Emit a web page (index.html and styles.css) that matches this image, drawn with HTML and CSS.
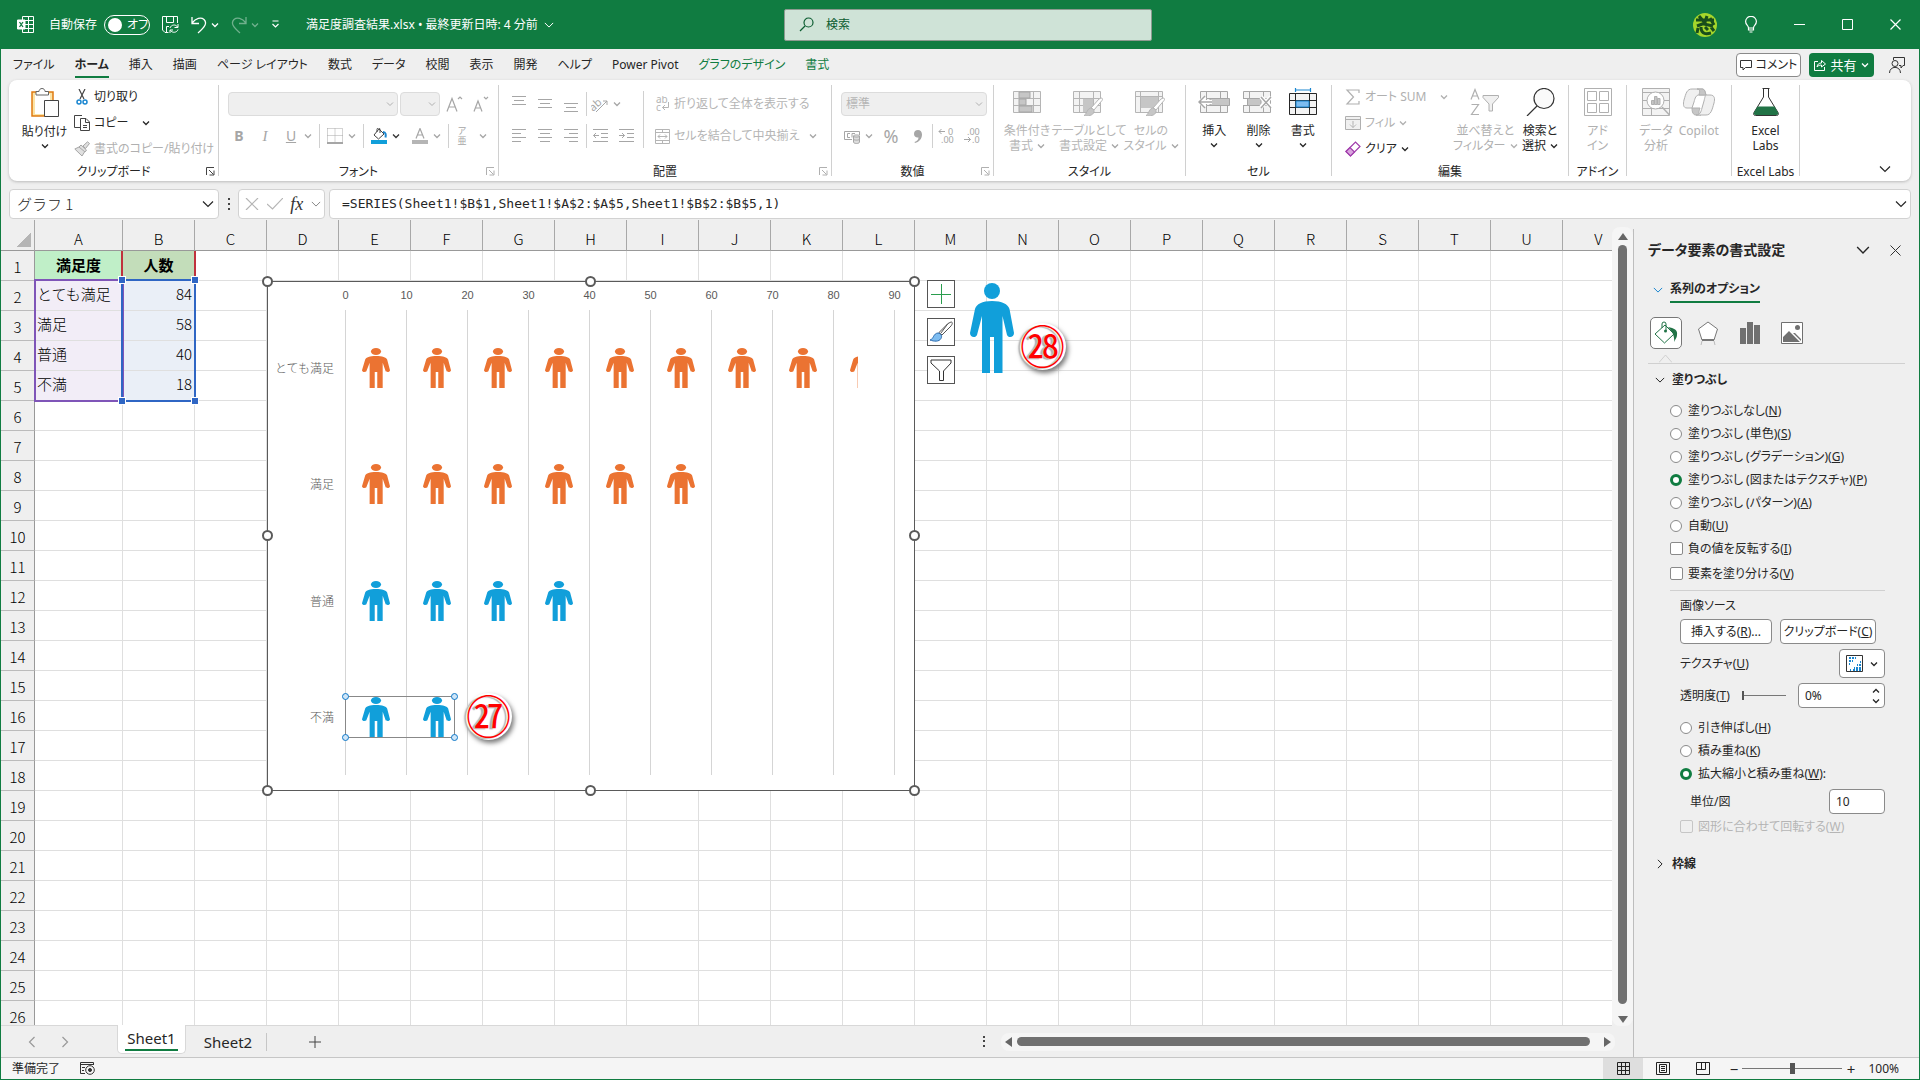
FILE: index.html
```
<!DOCTYPE html>
<html lang="ja">
<head>
	<meta charset="utf-8">
	<title>満足度調査結果.xlsx - Excel</title>
	<link rel="stylesheet" href="styles.css">
</head>
<body>
	<svg class="defs" aria-hidden="true">
		<symbol id="chev" viewBox="0 0 8 8"><path d="M1 2.5 L4 5.5 L7 2.5" fill="none" stroke="currentColor" stroke-width="1.3"/></symbol>
		<symbol id="bigchev" viewBox="0 0 12 12"><path d="M1 3.5 L6 8.5 L11 3.5" fill="none" stroke="currentColor" stroke-width="1.2"/></symbol>
		<symbol id="launch" viewBox="0 0 9 9"><path d="M0.5 8 V0.5 H8 M3 3 L7.5 7.5 M8 3.5 V8 H3.5" fill="none" stroke="currentColor"/></symbol>
		<symbol id="person" viewBox="0 0 44 90" preserveAspectRatio="none">
			<circle cx="22" cy="8" r="8"/>
			<path d="M22 18 C32 18 38 21 39.500 26 L44 50 C44 55 38 55 37 52 L32.500 33 V90 H24 V54 H20 V90 H12 V33 L7 52 C6 55 0 55 0 50 L5 26 C6.500 21 12 18 22 18 Z"/>
		</symbol>
		<symbol id="grid" viewBox="0 0 28 22"><path d="M.5 .5 H27.500 V21.500 H.5 Z" fill="#f3f3f3" stroke="currentColor"/><path d="M.5 7.500 H27.500 M.5 14.500 H27.500 M6.500 .5 V21.500 M20.500 .5 V21.500" fill="none" stroke="currentColor"/></symbol>
		<symbol id="brush" viewBox="0 0 20 20"><path d="M18 1 C19.500 1 20 2 19 3.500 L11 13 L8 11 L16 2 Z" fill="#fff" stroke="currentColor"/><path d="M7.500 11 C10 11.500 11.500 13 11 15 C10 18.500 5 19.500 1 18.500 C4 17.500 3.500 12 7.500 11 Z" fill="#c6c6c6" stroke="currentColor"/></symbol>
	</svg>

	<header class="titlebar">
		<div class="title-left">
			<svg width="17" height="17" viewBox="0 0 17 17" fill="none" stroke="#fff"><path d="M5.500 4 V.5 H16.500 V16.500 H5.500 V13 M5.500 4.500 H16.500 M8 8.500 H16.500 M5.500 12.500 H16.500 M11.500 .5 V16.500"/><path d="M.5 4 H8 V13 H.5 Z" fill="#fff"/><path d="M2.500 6 L6 11 M6 6 L2.500 11" stroke="#107c41" stroke-width="1.300"/></svg>
			<span class="autosave">自動保存</span>
			<button class="toggle"><i></i>オフ</button>
			<button class="t-btn save"><svg width="17" height="17" viewBox="0 0 17 17" fill="none" stroke="#fff"><path d="M6.500 16.500 H3 L.5 14 V.5 H15.500 V7 M4.500 .5 V6.500 H11.500 V.5 M4.500 16 V10.500 H7"/><path d="M8 12 C9 8.500 14 8 15.500 11 M16 8 V11.500 H12.500 M16 13.500 C15 17 10 17 8.500 14.500 M8 17 V14 H11"/></svg></button>
			<button class="t-btn"><svg width="16" height="18" viewBox="0 0 16 18" fill="none" stroke="#fff" stroke-width="1.300"><path d="M1 1 V7.500 H8 M1 7 C5 2 10 1 13 3.500 C16.500 7 14 11 7 17"/></svg><svg class="chev"><use href="#chev"/></svg></button>
			<button class="t-btn dim"><svg width="16" height="18" viewBox="0 0 16 18" fill="none" stroke="#fff" stroke-width="1.300"><path d="M15 1 V7.500 H8 M15 7 C11 2 6 1 3 3.500 C-.5 7 2 11 9 17"/></svg><svg class="chev"><use href="#chev"/></svg></button>
			<button class="t-btn more"><svg width="9" height="9" viewBox="0 0 9 9" fill="none" stroke="#fff" stroke-width="1.200"><path d="M1.500 1 H7.500 M1.500 4 L4.500 7 L7.500 4"/></svg></button>
			<button class="doc">満足度調査結果.xlsx • 最終更新日時: 4 分前<svg class="chev10"><use href="#bigchev"/></svg></button>
		</div>
		<label class="search">
			<svg width="15" height="15" viewBox="0 0 15 15" fill="none" stroke="#0b5c30" stroke-width="1.200"><circle cx="9.500" cy="5.500" r="4.500"/><path d="M6 9 L1 14"/></svg>
			<input type="text" placeholder="検索">
		</label>
		<div class="title-right">
			<button class="avatar"><svg width="24" height="24" viewBox="0 0 24 24"><circle cx="12" cy="12" r="12" fill="#a5d62b"/><path d="M3 7 H21 M6 3 L12 10 L4 13 M14 3 L12 9 M11 11 L20 13 M17 5 L21 12 M5 15 L4 20 M8 14 C8 22 14 21 18 20 M12 14 L15 17 M18 14 L21 18" fill="none" stroke="#184d1b" stroke-width="3"/></svg></button>
			<button class="w-btn"><svg width="12" height="17" viewBox="0 0 12 17" fill="none" stroke="#fff" stroke-width="1.200"><path d="M3.500 12 C3.500 9 .6 9 .6 5.500 A5.400 5.200 0 0 1 11.400 5.500 C11.400 9 8.500 9 8.500 12 Z M3.500 12 V14 H8.500 V12 M4.500 16 H7.500"/></svg></button>
			<button class="w-btn"><svg width="11" height="11" viewBox="0 0 11 11" stroke="#fff"><path d="M0 5.500 H11"/></svg></button>
			<button class="w-btn"><svg width="11" height="11" viewBox="0 0 11 11" stroke="#fff" fill="none"><path d="M.5 .5 H10.500 V10.500 H.5 Z"/></svg></button>
			<button class="w-btn"><svg width="11" height="11" viewBox="0 0 11 11" stroke="#fff" stroke-width="1.200"><path d="M.5 .5 L10.500 10.500 M10.500 .5 L.5 10.500"/></svg></button>
		</div>
	</header>

	<nav class="menu">
		<button>ファイル</button>
		<button class="active">ホーム</button>
		<button>挿入</button>
		<button>描画</button>
		<button>ページ レイアウト</button>
		<button>数式</button>
		<button>データ</button>
		<button>校閲</button>
		<button>表示</button>
		<button>開発</button>
		<button>ヘルプ</button>
		<button>Power Pivot</button>
		<button class="context">グラフのデザイン</button>
		<button class="context">書式</button>
		<div class="menu-right">
			<button class="comment"><svg width="12" height="12" viewBox="0 0 12 12" fill="none" stroke="#333"><path d="M.5 1.500 H11.500 V8.500 H5.500 L3 11 V8.500 H.5 Z"/></svg>コメント</button>
			<button class="share"><svg width="12" height="12" viewBox="0 0 12 12" fill="none" stroke="#fff"><path d="M4 2.500 H.5 V11.500 H10.500 V8 M3 8 C3.500 5 5 4 7.500 4 V1.500 L11.500 5 L7.500 8 V6 C5 6 4 7 3 8 Z"/></svg>共有<svg class="chev"><use href="#chev"/></svg></button>
			<button class="presence"><svg width="16" height="16" viewBox="0 0 16 16" fill="none" stroke="#333"><path d="M4.500 3 V.5 H15.500 V8.500 H14 L12 11 V8.500 H10"/><circle cx="6" cy="6.500" r="3"/><path d="M.5 16 C.5 8.500 11.500 8.500 11.500 16"/></svg></button>
		</div>
	</nav>

	<section class="ribbon">
		<div class="group clipboard">
			<div class="body">
				<button class="big"><svg width="28" height="29" viewBox="0 0 28 29"><path d="M1 4 H22 V28 H1 Z" fill="#fbe3a6" stroke="#e07b10" stroke-width="1.500"/><path d="M4 6 H19 V26 H4 Z" fill="#fff"/><path d="M5 7 V3.500 H8 C8 -.5 14 -.5 14 3.500 H17.500 V7 Z" fill="#fff" stroke="#666"/><path d="M13.500 12.500 H27.500 V28.500 H13.500 Z" fill="#fff" stroke="#444"/></svg>貼り付け<svg class="chev"><use href="#chev"/></svg></button>
				<div class="stack">
					<button class="small"><svg width="16" height="16" viewBox="0 0 16 16" fill="none"><path d="M5 0 L10 10 M11 0 L6 10" stroke="#444" stroke-width="1.200"/><circle cx="5" cy="13" r="2" stroke="#1a86d0" stroke-width="1.500"/><circle cx="11" cy="13" r="2" stroke="#1a86d0" stroke-width="1.500"/></svg>切り取り</button>
					<button class="small"><svg width="16" height="16" viewBox="0 0 16 16" fill="#fff" stroke="#444"><path d="M8 .5 H.5 V12.500 H6"/><path d="M6.500 3.500 H12 L15.500 7 V15.500 H6.500 Z M11.500 3.500 V7.500 H15.500 M9 10.500 H13 M9 12.500 H13"/></svg>コピー<svg class="chev far"><use href="#chev"/></svg></button>
					<button class="small" disabled><svg width="16" height="16" viewBox="0 0 16 16" fill="#e0e0e0" stroke="#a6a6a6"><path d="M9 5 L13.500 .8 L15.500 2.500 L11.500 7.500 Z M7 4 L12.500 9 L11 11 L5 6 Z M5 6 L.8 8 L8 15 L10.500 11"/></svg>書式のコピー/貼り付け</button>
				</div>
			</div>
			<div class="caption">クリップボード<svg class="launch dark"><use href="#launch"/></svg></div>
		</div>

		<div class="group font off">
			<div class="body rows">
				<div class="line">
					<select class="face" aria-label="フォント" disabled><option></option></select><select class="size" aria-label="サイズ" disabled><option></option></select>
					<button class="ic"><svg width="18" height="18" viewBox="0 0 18 18"><path d="M1 16.500 L6 3.500 L11 16.500 M2.800 12 H9.200 M12 4 L14 2 L16 4" fill="none" stroke="currentColor" stroke-width="1.200"/></svg></button>
					<button class="ic"><svg width="18" height="18" viewBox="0 0 18 18"><path d="M2 16.500 L6 6 L10 16.500 M3.500 13 H8.500 M12 2 L14 4 L16 2" fill="none" stroke="currentColor" stroke-width="1.200"/></svg></button>
				</div>
				<div class="line second">
					<button class="ic b">B</button><button class="ic i">I</button><button class="ic u">U</button><svg class="chev"><use href="#chev"/></svg>
					<span class="vr"></span>
					<button class="ic"><svg width="16" height="16" viewBox="0 0 16 16" fill="none" stroke="currentColor"><path d="M.5 .5 H15.500 V14 M.5 .5 V14 M8 .5 V14 M.5 7.500 H15.500" stroke-dasharray="1 1"/><path d="M0 15 H16" stroke-width="2"/></svg></button><svg class="chev"><use href="#chev"/></svg>
					<span class="vr"></span>
					<button class="ic live"><svg width="16" height="16" viewBox="0 0 16 16"><path d="M8 1 L13 6 L7.500 11 L3 7 Z M6 4 V1.500 A1.500 1.500 0 0 1 9 1.500 V5" fill="#fff" stroke="#444"/><path d="M12 4 C15 4 15 7 14.500 9.500" fill="none" stroke="#1a86d0" stroke-width="2"/><path d="M0 12 H16 V16 H0 Z" fill="#119fda"/></svg></button><svg class="chev live"><use href="#chev"/></svg>
					<button class="ic color"><svg width="16" height="16" viewBox="0 0 16 16"><path d="M4 10.500 L8 .5 L12 10.500 M5.500 7 H10.500" fill="none" stroke="currentColor" stroke-width="1.200"/><path d="M0 12 H16 V16 H0 Z" fill="#b5b5b5"/></svg></button><svg class="chev"><use href="#chev"/></svg>
					<span class="vr"></span>
					<button class="ic ruby">ア<br>亜</button><svg class="chev"><use href="#chev"/></svg>
				</div>
			</div>
			<div class="caption">フォント<svg class="launch"><use href="#launch"/></svg></div>
		</div>

		<div class="group align off">
			<div class="body">
				<div class="rows">
					<div class="line">
						<button class="ic"><svg width="14" height="18" viewBox="0 0 14 18" stroke="currentColor"><path d="M0 1.500 H14 M2 5.500 H12 M0 9.500 H14"/></svg></button>
						<button class="ic"><svg width="14" height="18" viewBox="0 0 14 18" stroke="currentColor"><path d="M0 4.500 H14 M2 8.500 H12 M0 12.500 H14"/></svg></button>
						<button class="ic"><svg width="14" height="18" viewBox="0 0 14 18" stroke="currentColor"><path d="M0 8.500 H14 M2 12.500 H12 M0 16.500 H14"/></svg></button>
						<span class="vr"></span>
						<button class="ic"><svg width="18" height="18" viewBox="0 0 18 18"><text class="glyph" x="-3" y="12" font-size="11" transform="rotate(-42 6 8)">ab</text><path d="M5 17 L16 6 M12 6 H16 V10" fill="none" stroke="currentColor"/></svg></button><svg class="chev"><use href="#chev"/></svg>
					</div>
					<div class="line second">
						<button class="ic"><svg width="14" height="14" viewBox="0 0 14 14" stroke="currentColor"><path d="M0 .5 H14 M0 4.500 H9 M0 8.500 H14 M0 12.500 H9"/></svg></button>
						<button class="ic"><svg width="14" height="14" viewBox="0 0 14 14" stroke="currentColor"><path d="M0 .5 H14 M2 4.500 H12 M0 8.500 H14 M2 12.500 H12"/></svg></button>
						<button class="ic"><svg width="14" height="14" viewBox="0 0 14 14" stroke="currentColor"><path d="M0 .5 H14 M5 4.500 H14 M0 8.500 H14 M5 12.500 H14"/></svg></button>
						<span class="vr"></span>
						<button class="ic"><svg width="15" height="14" viewBox="0 0 15 14" stroke="currentColor" fill="none"><path d="M0 .5 H15 M8 4.500 H15 M8 8.500 H15 M0 12.500 H15 M6 6.500 H.5 M3 4 L.5 6.500 L3 9"/></svg></button>
						<button class="ic"><svg width="15" height="14" viewBox="0 0 15 14" stroke="currentColor" fill="none"><path d="M0 .5 H15 M8 4.500 H15 M8 8.500 H15 M0 12.500 H15 M0 6.500 H5.500 M3 4 L5.500 6.500 L3 9"/></svg></button>
					</div>
				</div>
				<span class="vr tall"></span>
				<div class="rows wide">
					<button class="small wrap"><svg width="15" height="16" viewBox="0 0 15 16"><text class="glyph" x="1" y="7" font-size="10">ab</text><text class="glyph" x="1" y="15" font-size="10">c</text><path d="M13.500 6 V11.500 H7.500 M10 9 L7.500 11.500 L10 14" fill="none" stroke="currentColor"/></svg>折り返して全体を表示する</button>
					<button class="small wrap"><svg width="15" height="15" viewBox="0 0 15 15" fill="none" stroke="currentColor"><path d="M.5 .5 H14.500 V14.500 H.5 Z M.5 3.500 H14.500 M.5 11.500 H14.500 M7.500 .5 V3.500 M7.500 11.500 V14.500 M3 7.500 H12 M5 5.500 L3 7.500 L5 9.500 M10 5.500 L12 7.500 L10 9.500"/></svg>セルを結合して中央揃え<svg class="chev end"><use href="#chev"/></svg></button>
				</div>
			</div>
			<div class="caption">配置<svg class="launch"><use href="#launch"/></svg></div>
		</div>

		<div class="group number off">
			<div class="body rows">
				<div class="line"><select class="format" aria-label="表示形式" disabled><option>標準</option></select></div>
				<div class="line second">
					<button class="ic"><svg width="16" height="16" viewBox="0 0 16 16" fill="none" stroke="currentColor"><path d="M8 11.500 H.5 V3.500 H15.500 V7"/><path d="M6 5.500 H3.500 V9.500 H6 M8 9.500 V5.500 H11"/><path d="M9.500 8 V14 C9.500 16 15.500 16 15.500 14 V8 C15.500 6.500 9.500 6.500 9.500 8 C9.500 9.500 15.500 9.500 15.500 8 M9.500 11 C9.500 12.500 15.500 12.500 15.500 11" fill="#ddd"/></svg></button><svg class="chev"><use href="#chev"/></svg>
					<button class="ic pct">%</button><button class="ic comma"><svg width="8" height="13" viewBox="0 0 8 13" fill="currentColor"><path d="M4 0 C6.500 0 8 2 8 4.500 C8 9 5 12 1 13 L.5 12 C3 11 4.500 9.500 4.500 7.500 C2 8 0 6.500 0 4 C0 1.500 1.500 0 4 0 Z"/></svg></button>
					<span class="vr"></span>
					<button class="ic"><svg width="16" height="16" viewBox="0 0 16 16"><path d="M7 3.500 H1 M3.500 1 L1 3.500 L3.500 6" fill="none" stroke="currentColor"/><text class="glyph" x="10" y="7" font-size="9">0</text><text class="glyph" x="3" y="15" font-size="9">.00</text></svg></button>
					<button class="ic"><svg width="16" height="16" viewBox="0 0 16 16"><path d="M0 11.500 H6.500 M4 9 L6.500 11.500 L4 14" fill="none" stroke="currentColor"/><text class="glyph" x="3" y="7" font-size="9">.00</text><text class="glyph" x="8" y="15" font-size="9">.0</text></svg></button>
				</div>
			</div>
			<div class="caption">数値<svg class="launch"><use href="#launch"/></svg></div>
		</div>

		<div class="group styles off">
			<div class="body">
				<button class="big"><svg width="32" height="28" viewBox="-2 -3 32 28"><use href="#grid" width="28" height="22"/><path d="M6 1 H17 V7 H6 Z M6 8 H13 V14 H6 Z M6 15 H19 V21 H6 Z" fill="#c6c6c6" stroke="#a6a6a6"/></svg>条件付き<span>書式<svg class="chev"><use href="#chev"/></svg></span></button>
				<button class="big"><svg width="32" height="28" viewBox="0 -3 32 28"><use href="#grid" width="28" height="22"/><path d="M10 8 H20 V21 H10 Z" fill="#c6c6c6"/><use href="#brush" x="10" y="6" width="20" height="20"/></svg>テーブルとして<span>書式設定<svg class="chev"><use href="#chev"/></svg></span></button>
				<button class="big"><svg width="32" height="28" viewBox="0 -3 32 28"><path d="M.5 .5 H27.500 V21.500 H.5 Z M.5 5.500 H27.500 M5.500 .5 V21.500 M23.500 .5 V21.500" fill="#f3f3f3" stroke="currentColor"/><path d="M6 6 H23 V17 H6 Z" fill="#c6c6c6"/><use href="#brush" x="10" y="6" width="20" height="20"/></svg>セルの<span>スタイル<svg class="chev"><use href="#chev"/></svg></span></button>
			</div>
			<div class="caption">スタイル</div>
		</div>

		<div class="group cells">
			<div class="body">
				<button class="big"><svg class="gray" width="32" height="28" viewBox="-2 -3 32 28"><use href="#grid" width="28" height="22"/><path d="M10 7.500 H29.500 V14.500 H10 Z" fill="#c6c6c6" stroke="#a6a6a6"/><path d="M12 11 H0 M5 6 L0 11 L5 16" fill="none" stroke="#fff" stroke-width="4"/><path d="M12 11 H-1 M5 5 L-1 11 L5 17" fill="none" stroke="#a6a6a6" stroke-width="1.500"/></svg>挿入<svg class="chev"><use href="#chev"/></svg></button>
				<button class="big"><svg class="gray" width="32" height="28" viewBox="0 -3 32 28"><use href="#grid" width="28" height="22"/><path d="M0 8 H4 V14 H0 Z" fill="#fff"/><path d="M4.500 7.500 H18 V14.500 H4.500 Z" fill="#c6c6c6" stroke="#a6a6a6"/><path d="M18 6 L28 16 M28 6 L18 16" stroke="#fff" stroke-width="4"/><path d="M18 6 L28 17 M28 6 L18 17" stroke="#a6a6a6" stroke-width="1.500"/></svg>削除<svg class="chev"><use href="#chev"/></svg></button>
				<button class="big"><svg width="32" height="28" viewBox="-2 -5 32 28"><path d="M6.500 -3 H21.500 M6.500 -5 V-1 M21.500 -5 V-1" stroke="#1a86d0" stroke-width="1.200"/><use href="#grid" width="28" height="22"/><path d="M7 8 H20 V14 H7 Z" fill="#7dbcf0" stroke="#1a86d0"/></svg>書式<svg class="chev"><use href="#chev"/></svg></button>
			</div>
			<div class="caption">セル</div>
		</div>

		<div class="group edit">
			<div class="body">
				<div class="stack">
					<button class="small" disabled><svg width="16" height="16" viewBox="0 0 16 16" fill="none" stroke="currentColor" stroke-width="1.200"><path d="M14 4 V1 H2 L8.500 8 L2 15 H14 V12"/></svg>オート SUM<svg class="chev far"><use href="#chev"/></svg></button>
					<button class="small" disabled><svg width="16" height="14" viewBox="0 0 16 14" fill="#f0f0f0" stroke="currentColor"><path d="M.5 .5 H15.500 V13.500 H.5 Z M.5 3.500 H15.500 M8 5 V11.500 M5 8.500 L8 11.500 L11 8.500"/></svg>フィル<svg class="chev"><use href="#chev"/></svg></button>
					<button class="small"><svg width="16" height="16" viewBox="0 0 16 16" stroke="#a03bab" stroke-width="1.200"><path d="M1 10.500 L10.500 1 L15 5.500 L5.500 15 Z" fill="#fff"/><path d="M1 10.500 L5 6.500 L9.500 11 L5.500 15 Z" fill="#d9a5de"/></svg>クリア<svg class="chev"><use href="#chev"/></svg></button>
				</div>
				<button class="big sort" disabled><svg width="30" height="28" viewBox="0 0 30 28"><path d="M1 11.500 L5 1.500 L9 11.500 M2.500 8 H7.500 M1.500 16.500 H8.500 L1.500 26.500 H9" fill="none" stroke="currentColor" stroke-width="1.200"/><path d="M13 7.500 H28.500 V9.500 L22.500 16 V23 H19 V16 L13 9.500 Z" fill="#f0f0f0" stroke="currentColor"/></svg>並べ替えと<span>フィルター<svg class="chev"><use href="#chev"/></svg></span></button>
				<button class="big"><svg width="30" height="28" viewBox="0 0 30 28" fill="#fafafa" stroke="#333" stroke-width="1.200"><circle cx="19" cy="10.500" r="10"/><path d="M12 18 L2 28"/></svg>検索と<span>選択<svg class="chev"><use href="#chev"/></svg></span></button>
			</div>
			<div class="caption">編集</div>
		</div>

		<div class="group addin">
			<div class="body">
				<button class="big" disabled><svg width="28" height="28" viewBox="0 0 28 28" fill="none" stroke="currentColor"><path d="M.5 .5 H27.500 V27.500 H.5 Z M3.500 3.500 H12.500 V12.500 H3.500 Z M15.500 3.500 H24.500 V12.500 H15.500 Z M3.500 15.500 H12.500 V24.500 H3.500 Z M15.500 15.500 H24.500 V24.500 H15.500 Z"/></svg>アド<span>イン</span></button>
			</div>
			<div class="caption">アドイン</div>
		</div>

		<div class="group data">
			<div class="body">
				<button class="big" disabled><svg width="28" height="28" viewBox="0 0 28 28" fill="#f3f3f3" stroke="currentColor"><path d="M.5 .5 H27.500 V27.500 H.5 Z M.5 4.500 H27.500 M.5 12.500 H27.500 M.5 20.500 H27.500 M9.500 20 V27"/><circle cx="13.500" cy="12.500" r="8.500" fill="#fff"/><path d="M9.500 12.500 H12 V16.500 H9.500 Z M12.500 8.500 H15 V16.500 H12.500 Z M15.500 10.500 H18 V16.500 H15.500 Z" fill="#c6c6c6"/><path d="M20 19 L27.500 27" stroke-width="1.500"/></svg>データ<span>分析</span></button>
				<button class="big" disabled><svg width="32" height="28" viewBox="0 0 32 28" stroke="currentColor"><path d="M9 1 H19 C22 1 22 4 23 7 H16 C13 7 12 10 11 14 L9 20 H4 C0 20 0 16 1 12 C3 5 4 1 9 1 Z" fill="#f0f0f0"/><path d="M19 1 C22 1 22 4 23 7 H16 C17 3 17 1 14 1 Z M9 20 C9 24 10 27 13 27 H18 C15 27 16 23 17 20 Z" fill="#c6c6c6"/><path d="M23 7 H27 C32 7 32 11 31 15 C29 22 28 27 23 27 H13 C17 27 18 24 19 20 L21 13 C22 9 22 8 23 7 Z" fill="#f0f0f0"/></svg>Copilot<span>&nbsp;</span></button>
			</div>
		</div>

		<div class="group labs">
			<div class="body">
				<button class="big"><svg width="26" height="28" viewBox="0 0 26 28"><path d="M9.500 .5 H16.500 M10.500 .5 V9 L1 24.500 C0 26.500 1 27.500 2.500 27.500 H23.500 C25 27.500 26 26.500 25 24.500 L15.500 9 V.5" fill="#fff" stroke="#333"/><path d="M4.500 18.500 H21.500 L25 24.500 C25.500 26 25 27 23.500 27 H2.500 C1 27 .5 26 1 24.500 Z" fill="#217346"/></svg>Excel<span>Labs</span></button>
			</div>
			<div class="caption">Excel Labs</div>
		</div>
		<button class="collapse" aria-label="リボンを折りたたむ"><svg class="chev12"><use href="#bigchev"/></svg></button>
	</section>

	<section class="formula-bar">
		<div class="box name-box"><input type="text" value="グラフ 1" aria-label="名前ボックス"><svg class="chev12"><use href="#bigchev"/></svg></div>
		<svg width="3" height="12" viewBox="0 0 3 12" fill="#444"><path d="M0 0 H2 V2 H0 Z M0 5 H2 V7 H0 Z M0 10 H2 V12 H0 Z"/></svg>
		<div class="box fx-box">
			<svg width="14" height="12" viewBox="0 0 14 12" stroke="#b5b5b5" stroke-width="1.200"><path d="M1 0 L13 12 M13 0 L1 12"/></svg>
			<svg width="16" height="12" viewBox="0 0 16 12" fill="none" stroke="#b5b5b5" stroke-width="1.200"><path d="M0 6 L5.500 11 L16 0"/></svg>
			<button class="fx">fx</button>
			<svg class="chev10"><use href="#bigchev"/></svg>
		</div>
		<div class="box formula"><input type="text" aria-label="数式" value="=SERIES(Sheet1!$B$1,Sheet1!$A$2:$A$5,Sheet1!$B$2:$B$5,1)"><svg class="chev12"><use href="#bigchev"/></svg></div>
	</section>

	<main>
		<div class="workbook">
			<div class="sheet-row">
				<div class="sheet">
					<table id="cells"></table>

					<div class="range labels-range"></div>
					<div class="range name-range"></div>
					<div class="range values-range"><i></i><i></i><i></i><i></i></div>

					<div class="chart">
						<div class="axis" id="axis"></div>
						<div class="plot" id="plot"></div>
						<i class="handle tl"></i><i class="handle tc"></i><i class="handle tr"></i>
						<i class="handle ml"></i><i class="handle mr"></i>
						<i class="handle bl"></i><i class="handle bc"></i><i class="handle br"></i>
					</div>
					<div class="chart-tools">
						<button><svg width="22" height="22" viewBox="0 0 22 22" stroke="#2a9d4e"><path d="M11.500 1 V21 M1 11.500 H21"/></svg></button>
						<button><svg width="24" height="22" viewBox="0 0 24 22"><path d="M22 1 C24 1 23.500 3 22 5 L13 14 L10 11.500 L19 2.500 Z M19 2.500 L12 12" fill="#fff" stroke="#555"/><path d="M9 12 C12 12.500 13.500 15 12 17.500 C10 21 5 20.500 1 19 C5 18 4 12.500 9 12 Z" fill="#7dbcf0" stroke="#2b6cb0"/></svg></button>
						<button><svg width="22" height="22" viewBox="0 0 22 22" fill="#fff" stroke="#333"><path d="M1 1 H21 V4 L13.500 12 V21.500 H9.500 V12 L1 4 Z"/></svg></button>
					</div>
					<svg class="big-person"><use href="#person"/></svg>
					<span class="callout c27">㉗</span>
					<span class="callout c28">㉘</span>
				</div>
				<div class="vscroll"><i class="up"></i><i class="thumb"></i><i class="down"></i></div>
			</div>
			<div class="tabbar">
				<button class="nav"><svg class="chev12 prev"><use href="#bigchev"/></svg></button>
				<button class="nav"><svg class="chev12 next"><use href="#bigchev"/></svg></button>
				<button class="tab active"><span>Sheet1</span></button>
				<button class="tab">Sheet2</button>
				<button class="add"><svg width="12" height="12" viewBox="0 0 12 12" stroke="#444"><path d="M6 0 V12 M0 6 H12"/></svg></button>
				<svg class="grip" width="2" height="11" viewBox="0 0 2 11" fill="#444"><path d="M0 0 H2 V2 H0 Z M0 4 H2 V6 H0 Z M0 9 H2 V11 H0 Z"/></svg>
				<div class="hscroll"><i class="left"></i><i class="thumb"></i><i class="right"></i></div>
			</div>
		</div>

		<aside class="pane">
			<div class="pane-title"><h1>データ要素の書式設定</h1>
				<button><svg width="14" height="14" viewBox="0 0 12 12"><use href="#bigchev"/></svg></button>
				<button><svg width="11" height="11" viewBox="0 0 11 11" stroke="#333"><path d="M.5 .5 L10.500 10.500 M10.500 .5 L.5 10.500"/></svg></button>
			</div>
			<div class="options"><svg class="chev10 blue"><use href="#bigchev"/></svg><b>系列のオプション</b></div>
			<div class="kinds">
				<button class="on"><svg width="24" height="24" viewBox="0 0 24 24"><path d="M11 4 L20 13 L10.500 22 L1 13 Z" fill="#fff" stroke="#217346"/><path d="M8 7 V3 A2 2 0 0 1 12 3 V10" fill="none" stroke="#217346"/><circle cx="11.500" cy="10" r="1.500" fill="#217346"/><path d="M14 6 C20 7 24 9 23 14 C23 17 21 18 20.500 21 C20 16 20 12 14 6 Z" fill="#217346"/></svg></button>
				<button><svg width="20" height="24" viewBox="0 0 20 24"><path d="M10 1 L19.500 8 L16 19 H4 L.5 8 Z" fill="#fff" stroke="#777"/><path d="M4 19 H16" stroke="#777" stroke-width="2"/><path d="M4 20 L3 24 M16 20 L17 24" stroke="#bbb"/></svg></button>
				<button><svg width="20" height="22" viewBox="0 0 20 22" fill="#707070"><path d="M0 6 H6 V22 H0 Z M7 0 H13 V22 H7 Z M14 3 H20 V22 H14 Z"/></svg></button>
				<button><svg width="22" height="22" viewBox="0 0 22 22"><path d="M.5 .5 H21.500 V21.500 H.5 Z" fill="#fff" stroke="#707070"/><circle cx="16.500" cy="5.500" r="2.500" fill="#707070"/><path d="M2 20 V15 L8 9 L19 20 Z M12 11 L14 11 L20 17 V19 Z" fill="#707070"/></svg></button>
			</div>
			<svg class="notch" width="13" height="9" viewBox="0 0 13 9"><path d="M0 8.500 L6.500 1 L13 8.500" fill="#efefef" stroke="#d0d0d0"/></svg>
			<div class="section"><svg class="chev10"><use href="#bigchev"/></svg>塗りつぶし</div>
			<div class="choices">
				<label><input type="radio" name="fill">塗りつぶしなし(<u>N</u>)</label>
				<label><input type="radio" name="fill">塗りつぶし (単色)(<u>S</u>)</label>
				<label><input type="radio" name="fill">塗りつぶし (グラデーション)(<u>G</u>)</label>
				<label><input type="radio" name="fill" checked>塗りつぶし (図またはテクスチャ)(<u>P</u>)</label>
				<label><input type="radio" name="fill">塗りつぶし (パターン)(<u>A</u>)</label>
				<label><input type="radio" name="fill">自動(<u>U</u>)</label>
				<label><input type="checkbox">負の値を反転する(<u>I</u>)</label>
				<label class="gap"><input type="checkbox">要素を塗り分ける(<u>V</u>)</label>
			</div>
			<div class="details">
				<div class="source">画像ソース</div>
				<div class="row buttons"><button class="btn">挿入する(<u>R</u>)...</button><button class="btn">クリップボード(<u>C</u>)</button></div>
				<div class="row texture"><span>テクスチャ(<u>U</u>)</span><button class="btn pick" aria-label="テクスチャ"><svg width="17" height="17" viewBox="0 0 17 17"><path d="M.5 .5 H16.500 V16.500 H.5 Z" fill="#fff" stroke="#333"/><path d="M3 3 H5 M6 3 H8 M9 3 H10 M3 6 H5 M6 6 H7 M3 9 H4 M14 7 H15 M11 10 H12 M13 10 H15 M8 13 H9 M10 13 H12 M13 13 H15 M4 15 H5 M7 15 H9 M10 15 H12 M13 15 H15" stroke="#1a86d0" stroke-width="2"/></svg><svg class="chev"><use href="#chev"/></svg></button></div>
				<div class="row alpha"><label for="alpha">透明度(<u>T</u>)</label><input type="range" value="0" aria-label="透明度"><div class="spin"><input type="text" id="alpha" value="0%"><span><svg class="chev flip"><use href="#chev"/></svg><svg class="chev"><use href="#chev"/></svg></span></div></div>
				<div class="choices inner">
					<label><input type="radio" name="stack">引き伸ばし(<u>H</u>)</label>
					<label><input type="radio" name="stack">積み重ね(<u>K</u>)</label>
					<label><input type="radio" name="stack" checked>拡大縮小と積み重ね(<u>W</u>):</label>
				</div>
				<div class="row units"><label for="units">単位/図</label><input type="text" id="units" value="10"></div>
				<div class="choices inner"><label class="disabled"><input type="checkbox" disabled>図形に合わせて回転する(<u>W</u>)</label></div>
			</div>
			<div class="section border"><svg class="chev10 next"><use href="#bigchev"/></svg>枠線</div>
		</aside>
	</main>

	<footer class="status">
		<span>準備完了</span>
		<svg width="15" height="13" viewBox="0 0 15 13" fill="none" stroke="#333"><path d="M5 11.500 H.5 V.5 H13.500 V3 M.5 2.500 H13.500 M2 5.500 H5 M2 8.500 H4"/><circle cx="10" cy="8" r="4.300"/><circle cx="10" cy="8" r="1.500" fill="#333"/></svg>
		<div class="views">
			<button class="on"><svg width="13" height="13" viewBox="0 0 13 13" fill="none" stroke="#222"><path d="M.5 .5 H12.500 V12.500 H.5 Z M4.500 0 V13 M8.500 0 V13 M0 4.500 H13 M0 8.500 H13"/></svg></button>
			<button><svg width="14" height="13" viewBox="0 0 14 13" fill="none" stroke="#222"><path d="M.5 .5 H13.500 V12.500 H.5 Z M3.500 2.500 H10.500 V10.500 H3.500 Z M5 4.500 H9 M5 6.500 H9 M5 8.500 H9"/></svg></button>
			<button><svg width="14" height="13" viewBox="0 0 14 13" fill="none" stroke="#222"><path d="M.5 .5 H13.500 V12.500 H.5 Z M5.500 .5 V7.500 M9.500 .5 V7.500 H.5"/></svg></button>
		</div>
		<button class="step">−</button>
		<input type="range" class="zoom" value="50" aria-label="ズーム">
		<button class="step">+</button>
		<span class="percent">100%</span>
	</footer>
	<script src="script.js"></script>
</body>
</html>
```
FILE: styles.css
```
*
{
	box-sizing: border-box;
}

body
{
	margin: 0;
	height: 100vh;
	display: flex;
	flex-direction: column;
	overflow: hidden;
	background: #efefef;
	border: solid #107c41;
	border-width: 0 1px 1px;
	color: #262626;
	font: 12px/16px "Noto Sans", "Noto Sans CJK JP", sans-serif;
	font-feature-settings: "palt";
}

button, input, select
{
	margin: 0;
	padding: 0;
	border: 0;
	background: none;
	color: inherit;
	font: inherit;
	font-feature-settings: inherit;
	white-space: nowrap;
}

svg
{
	flex: none;
}

.defs
{
	position: absolute;
	width: 0;
	height: 0;
}

.chev
{
	width: 8px;
	height: 8px;
}

.chev10
{
	width: 10px;
	height: 10px;
}

.chev12
{
	width: 12px;
	height: 12px;
}

.next
{
	transform: rotate(-90deg);
}

.prev
{
	transform: rotate(90deg);
}

.flip
{
	transform: rotate(180deg);
}

.blue
{
	color: #1a86d0;
}

/* title bar */

.titlebar
{
	height: 49px;
	flex: none;
	display: flex;
	align-items: center;
	background: #107c41;
	color: #fff;
}

.title-left
{
	flex: 1 1 0;
	display: flex;
	align-items: center;
	padding-left: 16px;
}

.autosave
{
	margin: 0 7px 0 15px;
}

.toggle
{
	display: flex;
	align-items: center;
	gap: 5px;
	width: 46px;
	height: 20px;
	padding-left: 3px;
	border: 1px solid #fff;
	border-radius: 10px;
}

.toggle i
{
	width: 14px;
	height: 14px;
	border-radius: 7px;
	background: #fff;
}

.t-btn
{
	display: flex;
	align-items: center;
	gap: 4px;
	margin-left: 12px;
}

.t-btn.dim
{
	opacity: .4;
}

.doc
{
	display: flex;
	align-items: center;
	gap: 6px;
	margin-left: 26px;
}

.search
{
	width: 368px;
	height: 32px;
	display: flex;
	align-items: center;
	gap: 12px;
	padding-left: 14px;
	background: #cfe3d7;
	border: 1px solid #8c9a90;
	border-radius: 2px;
}

.search input
{
	flex: 1;
}

.search input::placeholder
{
	color: #0b5c30;
	opacity: 1;
}

.title-right
{
	flex: 1 1 0;
	display: flex;
	justify-content: flex-end;
}

.w-btn
{
	width: 48px;
	height: 48px;
	display: flex;
	align-items: center;
	justify-content: center;
}

.avatar
{
	display: flex;
	align-items: center;
	margin-right: 10px;
}

/* ribbon tabs */

.menu
{
	height: 31px;
	flex: none;
	display: flex;
	align-items: center;
	gap: 20px;
	padding: 0 14px 0 12px;
}

.menu .active
{
	font-weight: bold;
	box-shadow: 0 3px 0 #efefef, 0 5px 0 #107c41;
}

.menu .context
{
	color: #107c41;
}

.menu-right
{
	display: flex;
	align-items: center;
	gap: 8px;
	margin-left: auto;
}

.comment, .share
{
	display: flex;
	align-items: center;
	justify-content: center;
	gap: 4px;
	height: 24px;
	width: 65px;
	border-radius: 4px;
}

.comment
{
	background: #fff;
	border: 1px solid #8a8a8a;
}

.share
{
	background: #107c41;
	color: #fff;
	font-size: 13px;
}

.presence
{
	display: flex;
	margin-left: 7px;
}

/* ribbon */

.ribbon
{
	height: 101px;
	flex: none;
	display: flex;
	margin: 0 8px;
	padding: 5px 0 5px;
	background: #fff;
	border-radius: 8px;
	box-shadow: 0 1px 3px #bbb;
}

.group
{
	flex: none;
	display: flex;
	flex-direction: column;
	justify-content: space-between;
	border-right: 1px solid #d0d0d0;
}

.group .body
{
	display: flex;
	align-items: flex-start;
	padding-top: 3px;
}

.caption
{
	position: relative;
	margin-bottom: -4px;
	text-align: center;
}

.launch
{
	position: absolute;
	right: 3px;
	bottom: 4px;
	width: 9px;
	height: 9px;
	color: #b0b0b0;
}

.launch.dark
{
	color: #444;
}

.off, button:disabled
{
	color: #b0b0b0;
}

.off .caption
{
	color: #262626;
}

.off .launch
{
	color: #b0b0b0;
}

.off button, .off .chev
{
	color: #a6a6a6;
}

.off .small, .off .big
{
	color: #b5b5b5;
}

.off .live
{
	color: #333;
}

.gray
{
	color: #a6a6a6;
}

.big
{
	display: flex;
	flex-direction: column;
	align-items: center;
	line-height: 15px;
}

.big > svg:first-child
{
	margin-bottom: 7px;
}

.big > .chev
{
	margin-top: 3px;
}

.big span
{
	display: flex;
	align-items: center;
	gap: 4px;
}

.stack
{
	display: flex;
	flex-direction: column;
	align-items: flex-start;
	gap: 10px;
	padding-top: 1px;
}

.small
{
	display: flex;
	align-items: center;
	gap: 4px;
	height: 16px;
}

.small .far
{
	margin-left: 10px;
}

.group .rows
{
	display: flex;
	flex-direction: column;
	align-items: stretch;
	gap: 8px;
	padding-top: 7px;
}

.line
{
	display: flex;
	align-items: center;
	height: 24px;
}

.ic
{
	width: 24px;
	display: flex;
	align-items: center;
	justify-content: center;
}

.glyph
{
	fill: currentColor;
	font-family: "Noto Sans", sans-serif;
}

.vr
{
	flex: none;
	align-self: stretch;
	width: 1px;
	background: #d0d0d0;
}

.clipboard
{
	width: 210px;
}

.clipboard .body
{
	padding-left: 13px;
	gap: 7px;
}

.clipboard .big
{
	width: 45px;
}

.font
{
	width: 280px;
}

.font .line
{
	padding-left: 9px;
}

.font .second
{
	padding-left: 7px;
}

select
{
	height: 24px;
	appearance: none;
	background: #efefef url("data:image/svg+xml,%3Csvg xmlns='http://www.w3.org/2000/svg' width='8' height='8'%3E%3Cpath d='M1 2.500 L4 5.500 L7 2.500' fill='none' stroke='%23b0b0b0'/%3E%3C/svg%3E") no-repeat right 3px center;
	border: 1px solid #dcdcdc;
	border-radius: 4px;
}

select:disabled
{
	opacity: 1;
	color: #b5b5b5;
}

.face
{
	width: 170px;
	margin-right: 2px;
}

.size
{
	width: 40px;
}

.size + .ic
{
	margin-left: 2px;
}

.font .ic
{
	width: 26px;
}

.font .second .vr
{
	margin: 0 2px 0 7px;
}

.font .color
{
	margin-left: 7px;
}

.font .b
{
	font-size: 14px;
	font-weight: bold;
}

.font .i
{
	font: italic 15px "Liberation Serif", serif;
}

.font .u
{
	font-size: 14px;
	text-decoration: underline;
}

.font .ruby
{
	width: 22px;
	margin-right: 6px;
	font-size: 9px;
	line-height: 10px;
}

.align
{
	width: 333px;
}

.align .body
{
	padding-left: 7px;
}

.align .rows
{
	padding-top: 4px;
}

.align .ic
{
	width: 26px;
}

.vr.tall
{
	margin: 3px 11px 0 4px;
}

.align .rows .vr
{
	margin-left: 2px;
}

.align .rows.wide
{
	flex: 1;
	gap: 16px;
	padding: 8px 14px 0 0;
}

.small .end
{
	margin-left: auto;
}

.number
{
	width: 162px;
}

.number .line
{
	padding-left: 9px;
}

.format
{
	width: 146px;
	padding-left: 4px;
}

.number .ic
{
	width: 26px;
}

.number .second
{
	padding-left: 7px;
}

.number .pct
{
	width: 36px;
	font-size: 18px;
}

.number .comma
{
	width: 18px;
}

.number .vr
{
	margin-left: 5px;
}

.styles
{
	width: 192px;
}

.styles .body
{
	padding-left: 2px;
}

.styles .big
{
	width: 62px;
}

.cells
{
	width: 146px;
}

.cells .body
{
	justify-content: space-evenly;
}

.edit
{
	width: 237px;
}

.edit .body
{
	padding-left: 13px;
	padding-right: 10px;
	justify-content: space-between;
}

.addin
{
	width: 58px;
}

.addin .body, .labs .body, .data .body
{
	justify-content: center;
	gap: 6px;
}

.data
{
	width: 105px;
}

.labs
{
	width: 68px;
}

.collapse
{
	align-self: flex-end;
	display: flex;
	margin: 0 20px 1px auto;
}

/* formula bar */

.formula-bar
{
	flex: none;
	display: flex;
	align-items: center;
	height: 31px;
	margin: 8px 8px 0;
	padding-bottom: 1px;
}

.box
{
	display: flex;
	align-items: center;
	height: 30px;
	background: #fff;
	border: 1px solid #d2d2d2;
	border-radius: 4px;
}

.box input
{
	flex: 1;
	min-width: 0;
}

.name-box
{
	width: 210px;
	margin-right: 9px;
	padding: 0 4px 0 7px;
	font-family: "Noto Sans CJK JP", sans-serif;
	font-size: 15px;
	font-weight: 300;
	font-feature-settings: normal;
}

.fx-box
{
	width: 87px;
	margin: 0 4px 0 7px;
	padding: 0 3px 0 6px;
	justify-content: space-between;
	color: #888;
}

.fx
{
	color: #333;
	font: italic 18px "Liberation Serif", serif;
}

.formula
{
	flex: 1;
	padding: 0 3px 0 12px;
	font-family: "DejaVu Sans Mono", monospace;
	font-size: 13px;
}

/* sheet */

main
{
	flex: 1;
	min-height: 0;
	display: flex;
}

.workbook
{
	flex: 1;
	min-width: 0;
	display: flex;
	flex-direction: column;
}

.sheet-row
{
	flex: 1;
	min-height: 0;
	display: flex;
}

.sheet
{
	position: relative;
	flex: 1;
	min-width: 0;
	overflow: hidden;
	background: #fff;
	border-bottom: 1px solid #d8d8d8;
}

#cells
{
	table-layout: fixed;
	width: 0;
	border-spacing: 0;
	font: 15px/20px "Noto Sans CJK JP", sans-serif;
	font-weight: 300;
	font-feature-settings: normal;
}

#cells th, #cells td
{
	height: 30px;
	padding: 0 2px;
	border-right: 1px solid #dfdfdf;
	border-bottom: 1px solid #dfdfdf;
	white-space: nowrap;
	color: #000;
}

#cells td
{
	padding-bottom: 4px;
}

#cells th
{
	padding-top: 2px;
	background: #efefef;
	font-weight: 300;
}

#cells thead th
{
	height: 31px;
	padding-top: 7px;
	border-color: #b5b5b5 #a8a8a8 #999;
}

#cells tbody th
{
	border-right-color: #999;
	border-bottom-color: #bbb;
}

#cells .corner
{
	background: linear-gradient(135deg, #efefef 50%, #b5b5b5 50%) no-repeat right 3px bottom 3px / 15px 15px #efefef;
}

#cells .head
{
	padding-bottom: 1px;
	font-weight: bold;
	text-align: center;
}

#cells .num
{
	text-align: right;
}

.a1 { background: #c0efc8; }
.b1 { background: #c3ddba; }
.text { background: #f2edf7; }
.num { background: #eaeff7; }

.range
{
	position: absolute;
	border: 2px solid;
}

.labels-range
{
	left: 33px;
	top: 59px;
	width: 90px;
	height: 123px;
	border-color: #7f55b8;
}

.name-range
{
	left: 120px;
	top: 31px;
	width: 75px;
	height: 30px;
	border-color: #c0323d;
	border-width: 0 2px;
}

.values-range
{
	left: 120px;
	top: 59px;
	width: 75px;
	height: 123px;
	border-color: #2f66c4;
}

.values-range i
{
	position: absolute;
	width: 6px;
	height: 6px;
	background: #2f66c4;
	outline: 1px solid #fff;
}

.values-range i:nth-child(odd) { left: -4px; }
.values-range i:nth-child(even) { right: -4px; }
.values-range i:nth-child(-n+2) { top: -4px; }
.values-range i:nth-child(n+3) { bottom: -4px; }

/* chart */

.chart
{
	position: absolute;
	left: 266px;
	top: 61px;
	width: 648px;
	height: 510px;
	padding: 4px 0 15px 77px;
	display: flex;
	flex-direction: column;
	background: #fff;
	border: 1px solid #5a5a5a;
	color: #595959;
}

.axis
{
	display: flex;
	height: 24px;
	margin-left: -30px;
	font: 11px/18px "Liberation Sans", sans-serif;
}

.axis span
{
	flex: 0 0 61px;
	text-align: center;
}

.plot
{
	flex: 1;
	width: 550px;
	display: grid;
	grid-template-rows: repeat(4, 1fr);
	align-items: center;
	background: repeating-linear-gradient(90deg, #d5d5d5 0 1px, #fff 1px 61px);
}

.bar-row
{
	display: flex;
	align-items: center;
	height: 42px;
}

.bar-row .cat
{
	flex: none;
	width: 77px;
	margin-left: -77px;
	padding-right: 11px;
	text-align: right;
	font-family: "Noto Sans CJK JP", sans-serif;
	font-weight: 300;
	font-feature-settings: normal;
}

.bar
{
	position: relative;
	display: flex;
	height: 42px;
	overflow: hidden;
	fill: #eb7332;
}

.bar.blue
{
	fill: #119fda;
}

.bar.selected
{
	overflow: visible;
	outline: 1px solid #888;
	outline-offset: -1px;
}

.bar svg
{
	width: 28px;
	height: 40px;
	margin: 1px 16px 1px 17px;
}

.bar.selected svg:nth-of-type(2)
{
	margin-right: 4px;
}

.bar i
{
	position: absolute;
	width: 7px;
	height: 7px;
	border: 1px solid #0f78c8;
	border-radius: 4px;
	background: #cfe6f8;
}

.bar i:nth-of-type(odd) { left: -3px; }
.bar i:nth-of-type(even) { right: -3px; }
.bar i:nth-of-type(-n+2) { top: -3px; }
.bar i:nth-of-type(n+3) { bottom: -3px; }

.handle
{
	position: absolute;
	width: 11px;
	height: 11px;
	border: 2px solid #5a5a5a;
	border-radius: 6px;
	background: #fff;
}

.tl, .tc, .tr { top: -6px; }
.ml, .mr { top: calc(50% - 6px); }
.bl, .bc, .br { bottom: -6px; }
.tl, .ml, .bl { left: -6px; }
.tc, .bc { left: calc(50% - 6px); }
.tr, .mr, .br { right: -6px; }

.chart-tools
{
	position: absolute;
	left: 926px;
	top: 60px;
	display: flex;
	flex-direction: column;
	gap: 10px;
}

.chart-tools button
{
	width: 28px;
	height: 28px;
	display: flex;
	align-items: center;
	justify-content: center;
	background: #fff;
	border: 1px solid #555;
}

.big-person
{
	position: absolute;
	left: 969px;
	top: 63px;
	width: 44px;
	height: 90px;
	fill: #119fda;
}

.callout
{
	position: absolute;
	width: 47px;
	height: 47px;
	border-radius: 24px;
	background: #fff;
	box-shadow: 2px 3px 5px #777;
	color: #f00;
	font: 45px/44px "Noto Sans CJK JP", sans-serif;
	text-align: center;
	text-shadow: 0 0 2px #fff, -3px 1px 1px #aaa;
}

.c27
{
	left: 464px;
	top: 473px;
}

.c28
{
	left: 1018px;
	top: 103px;
}

/* scroll bars and sheet tabs */

.vscroll
{
	width: 21px;
	display: flex;
	flex-direction: column;
	align-items: center;
	gap: 5px;
	margin-top: 7px;
	padding: 6px 0 3px;
	background: #f5f5f5;
	border-radius: 8px;
}

.vscroll .thumb
{
	flex: 1;
	width: 9px;
	margin-bottom: 7px;
	border-radius: 5px;
	background: #707070;
}

.up, .down
{
	border: solid transparent;
	border-width: 0 5px 7px;
	border-bottom-color: #666;
}

.down
{
	border-width: 7px 5px 0;
	border-top-color: #666;
}

.tabbar
{
	height: 31px;
	flex: none;
	display: flex;
	align-items: center;
	padding: 0 18px 0 25px;
	font-size: 15px;
}

.nav
{
	display: flex;
	margin-right: 21px;
	color: #999;
}

.tab
{
	position: relative;
	width: 77px;
	height: 18px;
	border-right: 1px solid #c6c6c6;
	line-height: 18px;
}

.tab.active
{
	align-self: flex-start;
	width: 69px;
	height: 29px;
	margin: -1px 4px 0 25px;
	background: #fff;
	border: 1px solid #d8d8d8;
	border-top: 0;
	border-radius: 0 0 5px 5px;
}

.tab.active span
{
	display: inline-block;
	padding: 0 2px;
	line-height: 21px;
	border-bottom: 2px solid #107c41;
}

.add
{
	display: flex;
	margin-left: 42px;
}

.grip
{
	margin: 0 16px 0 auto;
}

.hscroll
{
	flex: 0 1 614px;
	display: flex;
	align-items: center;
	gap: 5px;
	height: 18px;
	padding: 0 4px;
	background: #f5f5f5;
	border-radius: 8px;
}

.hscroll .thumb
{
	flex: 1;
	height: 9px;
	margin-right: 9px;
	border-radius: 5px;
	background: #707070;
}

.left, .right
{
	border: solid transparent;
	border-width: 5px 7px 5px 0;
	border-right-color: #666;
}

.right
{
	border-width: 5px 0 5px 7px;
	border-left-color: #666;
}

/* format pane */

.pane
{
	width: 286px;
	flex: none;
	margin-top: 9px;
	padding: 9px 14px 0;
	border-left: 1px solid #bdbdbd;
}

.pane-title
{
	display: flex;
	align-items: center;
	gap: 20px;
	height: 24px;
	padding-right: 4px;
}

.pane-title h1
{
	flex: 1;
	margin: 0;
	font-size: 14px;
	line-height: 20px;
	font-weight: bold;
}

.pane-title button
{
	display: flex;
}

.options
{
	display: flex;
	align-items: center;
	gap: 7px;
	margin: 15px 0 14px 5px;
}

.options b
{
	line-height: 24px;
	border-bottom: 2px solid #107c41;
}

.kinds
{
	display: flex;
	gap: 10px;
	padding: 0 2px 5px;
}

.kinds button
{
	width: 32px;
	height: 32px;
	display: flex;
	align-items: center;
	justify-content: center;
}

.kinds .on
{
	background: #fff;
	border: 1px solid #777;
	border-radius: 5px;
}

.notch
{
	display: block;
	margin-left: 11px;
}

.section
{
	display: flex;
	align-items: center;
	gap: 7px;
	padding-left: 7px;
	font-weight: bold;
}

.notch + .section
{
	border-top: 1px solid #d0d0d0;
	padding-top: 8px;
	margin-bottom: 11px;
}

.choices
{
	display: flex;
	flex-direction: column;
	margin-left: 22px;
}

.choices label
{
	display: flex;
	align-items: center;
	height: 23px;
	white-space: pre;
}

.choices .gap
{
	margin-top: 2px;
}

.choices input
{
	appearance: none;
	width: 12px;
	height: 12px;
	margin-right: 6px;
	background: #fff;
	border: 1px solid #8a8a8a;
	border-radius: 6px;
}

.choices input[type=checkbox]
{
	width: 13px;
	height: 13px;
	margin-right: 5px;
	border-radius: 2px;
}

.choices input:checked
{
	border: 3px solid #107c41;
}

.details
{
	margin: 5px 20px 0 22px;
	padding: 7px 0 0 10px;
	border-top: 1px solid #d0d0d0;
}

.row
{
	display: flex;
	align-items: center;
	justify-content: space-between;
}

.btn, .spin, .units input
{
	height: 25px;
	display: flex;
	align-items: center;
	justify-content: center;
	white-space: pre;
	background: #fff;
	border: 1px solid #8a8a8a;
	border-radius: 4px;
}

.buttons
{
	justify-content: flex-start;
	gap: 8px;
	margin: 5px 0;
}

.buttons .btn
{
	width: 92px;
}

.buttons .btn + .btn
{
	width: 96px;
}

.pick
{
	width: 46px;
	height: 29px;
	gap: 7px;
}

.alpha
{
	margin-top: 5px;
}

input[type=range]
{
	appearance: none;
	width: 44px;
	height: 10px;
	background: linear-gradient(#777, #777) no-repeat center / 100% 1px;
}

input[type=range]::-webkit-slider-thumb
{
	appearance: none;
	width: 2px;
	height: 9px;
	background: #555;
}

.spin
{
	width: 87px;
	padding: 0 4px 0 6px;
}

.spin input
{
	flex: 1;
	width: 0;
}

.spin span
{
	display: flex;
	flex-direction: column;
	gap: 2px;
}

.choices.inner
{
	margin: 8px 0 4px;
}

.units
{
	padding-left: 10px;
}

.units input
{
	width: 56px;
	padding-left: 6px;
}

.units + .choices.inner
{
	margin: 1px 0;
}

.disabled
{
	color: #b5b5b5;
}

.choices .disabled input
{
	border-color: #c6c6c6;
	background: none;
}

.section.border
{
	margin-top: 18px;
}

/* status bar */

.status
{
	height: 22px;
	flex: none;
	display: flex;
	align-items: center;
	padding: 0 20px 0 11px;
	background: #f5f5f5;
	border-top: 1px solid #c6c6c6;
}

.status > svg
{
	margin-left: 20px;
}

.views
{
	display: flex;
	margin-left: auto;
	margin-right: 2px;
}

.views button
{
	width: 40px;
	height: 21px;
	display: flex;
	align-items: center;
	justify-content: center;
}

.views .on
{
	background: #dedede;
}

.status .step
{
	width: 17px;
	font-size: 15px;
}

.status .zoom
{
	width: 100px;
	height: 12px;
}

.status .zoom::-webkit-slider-thumb
{
	width: 5px;
	height: 11px;
}

.percent
{
	margin-left: 9px;
}
```
FILE: script.js
```
var columns = 'ABCDEFGHIJKLMNOPQRSTUV'.split('');
var records = [
	['とても満足', 84, ''],
	['満足', 58, ''],
	['普通', 40, 'blue'],
	['不満', 18, 'blue selected']
];
var axisMax = 90;
var unit = 10;

function cellFor(row, col)
{
	if (row == 1 && col == 0) return '<td class="head a1">満足度</td>';
	if (row == 1 && col == 1) return '<td class="head b1">人数</td>';
	var rec = records[row - 2];
	if (rec && col == 0) return '<td class="text">' + rec[0] + '</td>';
	if (rec && col == 1) return '<td class="num">' + rec[1] + '</td>';
	return '<td></td>';
}

function drawCells()
{
	var html = '<colgroup>';
	html += '<col style="width:34px"><col style="width:88px">';
	for (var c = 1; c < columns.length; ++c) html += '<col style="width:72px">';
	html += '</colgroup><thead><tr><th class="corner"></th>';
	columns.forEach(function (name) { html += '<th>' + name + '</th>'; });
	html += '</tr></thead><tbody>';
	for (var r = 1; r <= 26; ++r)
	{
		html += '<tr><th>' + r + '</th>';
		for (var c = 0; c < columns.length; ++c) html += cellFor(r, c);
		html += '</tr>';
	}
	document.getElementById('cells').innerHTML = html + '</tbody>';
}

function drawChart()
{
	var ticks = '';
	for (var v = 0; v <= axisMax; v += 10) ticks += '<span>' + v + '</span>';
	document.getElementById('axis').innerHTML = ticks;

	var rows = '';
	records.forEach(function (rec)
	{
		var icons = '';
		for (var n = 0; n < rec[1]; n += unit) icons += '<svg><use href="#person"/></svg>';
		if (rec[2].indexOf('selected') > -1) icons += '<i></i><i></i><i></i><i></i>';
		rows += '<div class="bar-row"><span class="cat">' + rec[0] + '</span>' +
			'<div class="bar ' + rec[2] + '" style="width:' + (rec[1] / axisMax * 100) + '%">' + icons + '</div></div>';
	});
	document.getElementById('plot').innerHTML = rows;
}

drawCells();
drawChart();
```
